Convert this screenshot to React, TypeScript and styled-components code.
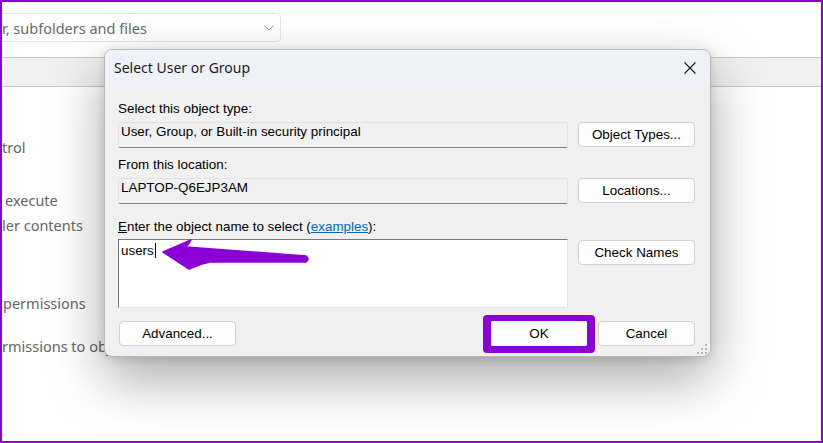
import React from 'react';
import styled, { createGlobalStyle } from 'styled-components';

const GlobalStyle = createGlobalStyle`
  html, body {
    margin: 0;
    padding: 0;
    background: #fff;
  }
`;

const PURPLE = '#8a00d6';

const Frame = styled.div`
  position: relative;
  width: 823px;
  height: 443px;
  box-sizing: border-box;
  border: 2px solid ${PURPLE};
  overflow: hidden;
  background: #fff;
  font-family: 'Noto Sans', 'Open Sans', sans-serif;
`;

const TopBar = styled.div`
  padding-top: 11px;
`;

const Dropdown = styled.div`
  margin-left: -10px;
  width: 289px;
  height: 29px;
  box-sizing: border-box;
  border: 1px solid #e6e6e6;
  border-radius: 4px;
  display: flex;
  align-items: center;
  justify-content: space-between;
  padding: 0 6px 0 9px;
  color: #6b6b6b;
  font-size: 14.5px;
`;

const Band = styled.div`
  margin-top: 15px;
  height: 30px;
  box-sizing: border-box;
  background: #f0f0f0;
  border-top: 1px solid #c6c6c6;
  border-bottom: 1px solid #c6c6c6;
`;

const PermList = styled.div`
  display: flex;
  flex-direction: column;
`;

const PermRow = styled.div<{ $top: number; $indent?: number }>`
  margin-top: ${p => p.$top}px;
  padding-left: ${p => p.$indent ?? 0}px;
  height: 20px;
  line-height: 20px;
  font-size: 14.5px;
  color: #666;
  white-space: nowrap;
`;

const Dialog = styled.div`
  position: absolute;
  left: 102px;
  top: 47px;
  width: 607px;
  box-sizing: border-box;
  border: 1px solid #b8b8b8;
  border-radius: 8px;
  overflow: hidden;
  background: #f0f0f0;
  box-shadow: 0 22px 55px rgba(0, 0, 0, 0.34), 0 2px 10px rgba(0, 0, 0, 0.12);
`;

const TitleBar = styled.div`
  height: 37px;
  display: flex;
  align-items: center;
  justify-content: space-between;
  padding: 0 14px 2px 9px;
  box-sizing: border-box;
  background: #eef2f8;
  font-size: 14px;
  color: #1a1a1a;
`;

const CloseButton = styled.div`
  width: 12px;
  height: 12px;
  display: flex;
`;

const Body = styled.div`
  padding: 15px 15px 10px 13px;
  font-family: 'Liberation Sans', Arial, sans-serif;
  font-size: 13.4px;
  color: #000;
`;

const Label = styled.div<{ $top?: number }>`
  margin-top: ${p => p.$top ?? 0}px;
  height: 14px;
  line-height: 14px;
  white-space: nowrap;
`;

const AccessKey = styled.span`
  text-decoration: underline;
`;

const Link = styled.span`
  color: #0066cc;
  text-decoration: underline;
`;

const FieldRow = styled.div<{ $top: number }>`
  margin-top: ${p => p.$top}px;
  display: flex;
  align-items: flex-start;
  gap: 10px;
`;

const ReadField = styled.div`
  width: 450px;
  height: 26px;
  box-sizing: border-box;
  padding: 1px 2px 0;
  line-height: 16px;
  background: #f0f0f0;
  border: 1px solid #e2e2e2;
  border-bottom-color: #858585;
  border-radius: 2px;
`;

const NameBox = styled.div`
  width: 450px;
  height: 69px;
  box-sizing: border-box;
  padding: 3px 2px 0;
  line-height: 16px;
  background: #fff;
  border: 1px solid #e3e3e3;
  border-top-color: #7a7a7a;
  border-left-color: #7a7a7a;
`;

const Caret = styled.span`
  display: inline-block;
  width: 1px;
  height: 15px;
  background: #000;
  vertical-align: -3px;
  margin-left: 1px;
`;

const Button = styled.div<{ $width?: number; $offset?: number; $drop?: number }>`
  width: ${p => p.$width ?? 117}px;
  height: 25px;
  margin-left: ${p => p.$offset ?? 0}px;
  margin-top: ${p => p.$drop ?? 0}px;
  box-sizing: border-box;
  display: flex;
  align-items: center;
  justify-content: center;
  background: #fdfdfd;
  border: 1px solid #d0d0d0;
  border-radius: 4px;
  flex-shrink: 0;
`;

const Footer = styled.div`
  margin-top: 13px;
  display: flex;
  align-items: center;
`;

const FooterRight = styled.div`
  margin-left: auto;
  display: flex;
  gap: 11px;
`;

const Highlight = styled.div`
  margin: -6px -8px -7px;
  padding: 6px 8px 7px;
  background: ${PURPLE};
  border-radius: 4px;
  display: flex;
  & > div {
    border-radius: 1px;
    border-color: #fff;
  }
`;

const Grip = styled.svg`
  position: absolute;
  right: 2px;
  bottom: 1px;
`;

const Arrow = styled.svg`
  position: absolute;
  left: 148px;
  top: 233px;
`;

export default function App() {
  return (
    <>
      <GlobalStyle />
      <Frame>
        <TopBar>
          <Dropdown>
            <span>r, subfolders and files</span>
            <svg width="10" height="6" viewBox="0 0 10 6">
              <path d="M0.5 0.5 L5 5 L9.5 0.5" fill="none" stroke="#a0a0a0" strokeWidth="1" />
            </svg>
          </Dropdown>
        </TopBar>
        <Band />
        <PermList>
          <PermRow $top={50}>trol</PermRow>
          <PermRow $top={33} $indent={3}>execute</PermRow>
          <PermRow $top={5}>ler contents</PermRow>
          <PermRow $top={58} $indent={1}>permissions</PermRow>
          <PermRow $top={23}>rmissions to objects</PermRow>
        </PermList>

        <Dialog>
          <TitleBar>
            <span>Select User or Group</span>
            <CloseButton>
              <svg width="12" height="12" viewBox="0 0 12 12">
                <path d="M0.5 0.5 L11.5 11.5 M11.5 0.5 L0.5 11.5" stroke="#1a1a1a" strokeWidth="1.1" />
              </svg>
            </CloseButton>
          </TitleBar>
          <Body>
            <Label>Select this object type:</Label>
            <FieldRow $top={6}>
              <ReadField>User, Group, or Built-in security principal</ReadField>
              <Button>Object Types...</Button>
            </FieldRow>
            <Label $top={10}>From this location:</Label>
            <FieldRow $top={6}>
              <ReadField>LAPTOP-Q6EJP3AM</ReadField>
              <Button>Locations...</Button>
            </FieldRow>
            <Label $top={16}>
              <AccessKey>E</AccessKey>nter the object name to select (<Link>examples</Link>):
            </Label>
            <FieldRow $top={5}>
              <NameBox>
                users<Caret />
              </NameBox>
              <Button $drop={1}>Check Names</Button>
            </FieldRow>
            <Footer>
              <Button $offset={1}>Advanced...</Button>
              <FooterRight>
                <Highlight>
                  <Button $width={96}>OK</Button>
                </Highlight>
                <Button $width={97}>Cancel</Button>
              </FooterRight>
            </Footer>
          </Body>
          <Grip width="11" height="11" viewBox="0 0 11 11">
            <g fill="#b4b4b4">
              <rect x="8" y="0" width="2" height="2" />
              <rect x="4" y="4" width="2" height="2" />
              <rect x="8" y="4" width="2" height="2" />
              <rect x="0" y="8" width="2" height="2" />
              <rect x="4" y="8" width="2" height="2" />
              <rect x="8" y="8" width="2" height="2" />
            </g>
          </Grip>
        </Dialog>

        <Arrow width="170" height="40" viewBox="0 0 170 40">
          <path
            d="M13 17 L41 5 Q39 9 36 12 L156 21 Q160 24 156 27 L60 27 Q49 29 39 34 Z"
            fill={PURPLE}
            stroke={PURPLE}
            strokeWidth="1.5"
            strokeLinejoin="round"
          />
        </Arrow>
      </Frame>
    </>
  );
}
